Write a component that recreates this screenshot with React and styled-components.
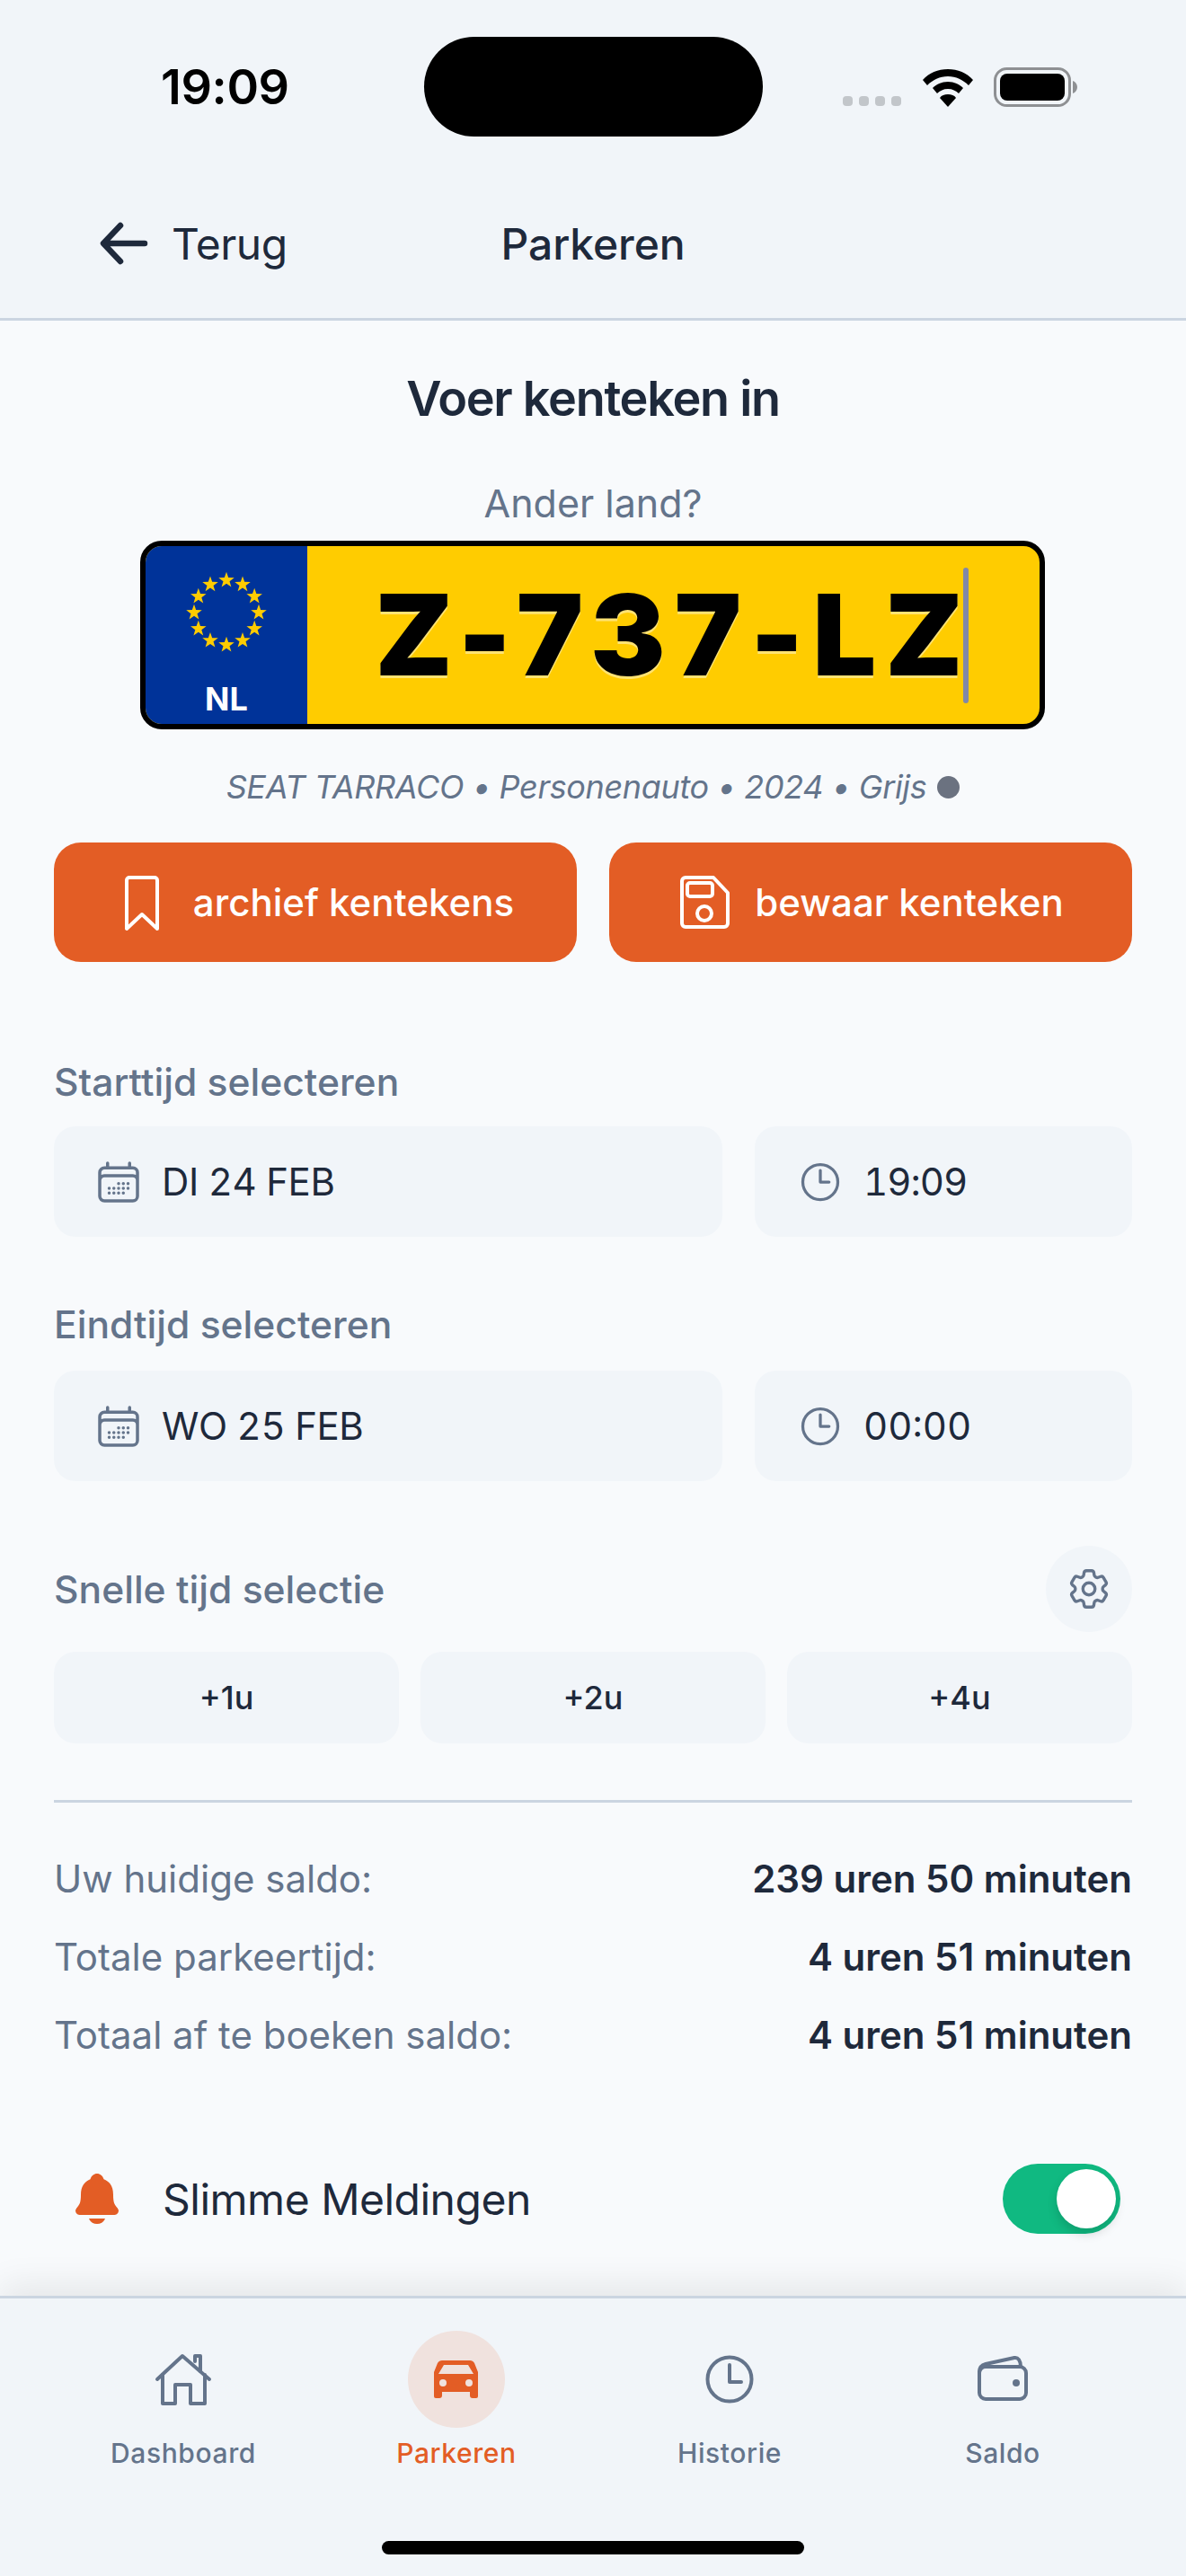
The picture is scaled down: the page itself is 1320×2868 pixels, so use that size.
import React from "react";
import styled, { createGlobalStyle } from "styled-components";
import {
  HiOutlineCalendarDays,
  HiOutlineClock,
  HiOutlineCog6Tooth,
} from "react-icons/hi2";
import { IoNotifications } from "react-icons/io5";

const GlobalStyle = createGlobalStyle`
  html, body { margin: 0; padding: 0; }
  body { font-family: Inter, "Liberation Sans", sans-serif; background: #f8fafc; }
`;

const Page = styled.div`
  width: 1320px;
  height: 2868px;
  display: flex;
  flex-direction: column;
  overflow: hidden;
`;

const Header = styled.header`
  height: 354px;
  background: #f1f5f9;
  border-bottom: 3px solid #cbd5e1;
  flex-shrink: 0;
`;

const StatusBar = styled.div`
  display: grid;
  grid-template-columns: 1fr 377px 1fr;
  align-items: center;
  padding-top: 41px;
`;

const Time = styled.div`
  font-size: 54px;
  font-weight: 600;
  color: #000;
  padding-left: 179px;
  letter-spacing: -0.4px;
`;

const Notch = styled.div`
  height: 111px;
  background: #000;
  border-radius: 56px;
`;

const StatusIcons = styled.div`
  display: flex;
  align-items: flex-end;
  height: 45px;
  padding-left: 89px;
`;

const SignalDots = styled.div`
  display: flex;
  gap: 7px;
  margin-right: 23px;
  margin-bottom: 1px;
`;

const SignalDot = styled.span`
  width: 11px;
  height: 11px;
  border-radius: 4px;
  background: #c2c6ca;
`;

const NavRow = styled.div`
  display: grid;
  grid-template-columns: 1fr auto 1fr;
  align-items: center;
  height: 120px;
  margin-top: 59px;
  padding: 0 108px;
  color: #1e293b;
`;

const BackLink = styled.div`
  display: flex;
  align-items: center;
  gap: 23px;
  font-size: 48px;
  font-weight: 400;
  letter-spacing: -0.5px;
`;

const PageTitle = styled.div`
  font-size: 48px;
  font-weight: 500;
  letter-spacing: -0.1px;
`;

const Main = styled.main`
  flex: 1;
  padding: 51px 60px 0;
  background: #f8fafc;
`;

const Heading = styled.h1`
  margin: 0;
  font-size: 54px;
  line-height: 72px;
  font-weight: 600;
  letter-spacing: -1.3px;
  text-align: center;
  color: #1e293b;
`;

const CountryLink = styled.div`
  margin-top: 50px;
  font-size: 43px;
  line-height: 60px;
  text-align: center;
  color: #64748b;
`;

const Plate = styled.div`
  display: flex;
  box-sizing: border-box;
  width: 1007px;
  height: 210px;
  margin: 12px 0 0 96px;
  border: 6px solid #000;
  border-radius: 24px;
  overflow: hidden;
  background: #ffcc00;
`;

const PlateBand = styled.div`
  width: 180px;
  flex-shrink: 0;
  background: #003399;
  display: flex;
  flex-direction: column;
  align-items: center;
  padding-top: 24px;
`;

const PlateCountry = styled.div`
  margin-top: 24px;
  font-size: 36px;
  line-height: 44px;
  font-weight: 700;
  color: #fff;
`;

const PlateField = styled.div`
  flex: 1;
  display: flex;
  align-items: center;
  justify-content: center;
  padding-right: 4px;
`;

const PlateText = styled.div`
  font-family: Inter, "Liberation Sans", sans-serif;
  font-size: 125px;
  line-height: 150px;
  font-weight: 900;
  letter-spacing: 10px;
  color: #000;
  text-shadow: 0 3px 0 rgba(255, 255, 255, 0.45);
`;

const Caret = styled.span`
  width: 6px;
  height: 151px;
  margin-left: -10px;
  border-radius: 3px;
  background: #8088a8;
`;

const VehicleLine = styled.div`
  display: flex;
  align-items: center;
  justify-content: center;
  gap: 12px;
  margin-top: 40px;
  font-size: 36px;
  line-height: 48px;
  font-style: italic;
  letter-spacing: -0.35px;
  color: #64748b;
`;

const ColourDot = styled.span`
  width: 25px;
  height: 25px;
  border-radius: 50%;
  background: #6b7280;
`;

const ActionRow = styled.div`
  display: grid;
  grid-template-columns: 1fr 1fr;
  gap: 36px;
  margin-top: 38px;
`;

const ActionButton = styled.div`
  height: 133px;
  box-sizing: border-box;
  padding-left: ${(p) => p.$inset}px;
  display: flex;
  align-items: center;
  justify-content: center;
  gap: ${(p) => p.$gap}px;
  background: #e35d25;
  border-radius: 30px;
  color: #fff;
  font-size: 42px;
  font-weight: 500;
`;

const FieldLabel = styled.div`
  margin-top: ${(p) => p.$top}px;
  font-size: 42.6px;
  line-height: 56px;
  font-weight: 500;
  color: #64748b;
`;

const FieldRow = styled.div`
  display: grid;
  grid-template-columns: 744px 1fr;
  gap: 36px;
  margin-top: ${(p) => p.$top}px;
`;

const Field = styled.div`
  height: 123px;
  display: flex;
  align-items: center;
  gap: ${(p) => p.$gap}px;
  padding-left: 44px;
  background: #f1f5f9;
  border-radius: 24px;
  font-size: 42px;
  font-variant-numeric: tabular-nums;
  letter-spacing: ${(p) => p.$spacing || 0}px;
  color: #1e293b;
  svg { color: #64748b; }
`;

const ClockIcon = styled(HiOutlineClock)`
  margin-left: 3px;
`;

const QuickHeader = styled.div`
  display: flex;
  align-items: center;
  justify-content: space-between;
  margin-top: 72px;
`;

const QuickLabel = styled.div`
  font-size: 42.6px;
  font-weight: 500;
  color: #64748b;
`;

const GearButton = styled.div`
  width: 96px;
  height: 96px;
  border-radius: 50%;
  background: #f1f5f9;
  color: #64748b;
  display: flex;
  align-items: center;
  justify-content: center;
`;

const QuickRow = styled.div`
  display: grid;
  grid-template-columns: repeat(3, 1fr);
  gap: 24px;
  margin-top: 22px;
`;

const QuickButton = styled.div`
  height: 102px;
  display: flex;
  align-items: center;
  justify-content: center;
  background: #f1f5f9;
  border-radius: 24px;
  font-size: 36px;
  font-weight: 500;
  color: #1e293b;
`;

const Divider = styled.div`
  height: 3px;
  margin-top: 63px;
  background: #cbd5e1;
`;

const Summary = styled.div`
  margin-top: 41px;
`;

const SummaryRow = styled.div`
  height: 87px;
  display: flex;
  align-items: center;
  justify-content: space-between;
  font-size: 42px;
`;

const SummaryLabel = styled.span`
  color: #64748b;
`;

const SummaryValue = styled.span`
  font-weight: 600;
  color: #1e293b;
`;

const NotifyRow = styled.div`
  display: flex;
  align-items: center;
  margin-top: 100px;
  padding: 0 13px 0 16px;
  color: #e35d25;
`;

const NotifyLabel = styled.div`
  flex: 1;
  margin-left: 41px;
  font-size: 48px;
  font-weight: 400;
  letter-spacing: -0.5px;
  color: #1e293b;
`;

const Toggle = styled.div`
  width: 131px;
  height: 78px;
  box-sizing: border-box;
  padding: 6px 5px;
  display: flex;
  justify-content: flex-end;
  border-radius: 39px;
  background: #10b981;
`;

const ToggleKnob = styled.div`
  width: 66px;
  height: 66px;
  border-radius: 50%;
  background: #fff;
  box-shadow: 0 6px 12px rgba(0, 0, 0, 0.15);
`;

const BottomNav = styled.nav`
  position: relative;
  height: 273px;
  flex-shrink: 0;
  border-top: 3px solid #cbd5e1;
  background: #f1f5f9;
  box-shadow: 0 -12px 36px rgba(0, 0, 0, 0.08);
  display: flex;
  flex-direction: column;
  align-items: center;
  padding-top: 36px;
`;

const NavItems = styled.div`
  display: grid;
  grid-template-columns: repeat(4, 304px);
`;

const NavItem = styled.div`
  display: flex;
  flex-direction: column;
  align-items: center;
  gap: 7px;
  font-size: 30px;
  line-height: 42px;
  font-weight: 500;
  letter-spacing: 0.6px;
  color: ${(p) => (p.$active ? "#e35d25" : "#64748b")};
`;

const NavIconWrap = styled.div`
  width: 108px;
  height: 108px;
  border-radius: 50%;
  display: flex;
  align-items: center;
  justify-content: center;
  background: ${(p) => (p.$active ? "#f0e2de" : "transparent")};
`;

const HomeIndicator = styled.div`
  width: 470px;
  height: 15px;
  margin-top: 77px;
  border-radius: 8px;
  background: #000;
`;

const BatteryIcon = styled.svg`
  margin-left: 22px;
`;

const Wifi = () => (
  <svg width="58" height="42" viewBox="0 0 58 42" fill="#000">
    <path d="M29 0C18 0 8 4 1 12l5 6c6-6 14-10 23-10s17 4 23 10l5-6C50 4 40 0 29 0z" />
    <path d="M29 14c-7 0-13 3-17 7l5 6c3-3 7-5 12-5s9 2 12 5l5-6c-4-4-10-7-17-7z" />
    <path d="M29 28c-4 0-7 1-9 4l9 10 9-10c-2-3-5-4-9-4z" />
  </svg>
);

const Battery = () => (
  <BatteryIcon width="94" height="44" viewBox="0 0 94 44">
    <rect x="1.5" y="1.5" width="83" height="41" rx="13" fill="none" stroke="#8e9093" strokeWidth="3" />
    <rect x="7" y="7" width="72" height="30" rx="8" fill="#000" />
    <path d="M88 15c3 1 5 4 5 7s-2 6-5 7z" fill="#8e9093" />
  </BatteryIcon>
);

const BackArrow = () => (
  <svg width="60" height="52" viewBox="0 0 60 52" fill="none" stroke="#1e293b" strokeWidth="6.5" strokeLinecap="round" strokeLinejoin="round">
    <path d="M26 6L7 26l19 20M8 26h45" />
  </svg>
);

const PlateStars = () => {
  const stars = Array.from({ length: 12 }, (_, i) => {
    const a = (i * Math.PI) / 6;
    const cx = 50 + 36 * Math.sin(a);
    const cy = 50 - 36 * Math.cos(a);
    const pts = Array.from({ length: 10 }, (_, k) => {
      const r = k % 2 ? 3.7 : 9.2;
      const t = (k * Math.PI) / 5;
      return `${(cx + r * Math.sin(t)).toFixed(2)},${(cy - r * Math.cos(t)).toFixed(2)}`;
    }).join(" ");
    return <polygon key={i} points={pts} fill="#ffcc00" />;
  });
  return (
    <svg width="100" height="100" viewBox="0 0 100 100">
      {stars}
    </svg>
  );
};

const BookmarkIcon = () => (
  <svg width="40" height="64" viewBox="0 0 40 64" fill="none" stroke="#fff" strokeWidth="4" strokeLinejoin="round">
    <path d="M3 7a3 3 0 0 1 3-3h28a3 3 0 0 1 3 3v54L20 45 3 61z" />
  </svg>
);

const SaveIcon = () => (
  <svg width="60" height="64" viewBox="0 0 60 64" fill="none" stroke="#fff" strokeWidth="4" strokeLinejoin="round">
    <path d="M9 4h31l16 17v34a4 4 0 0 1-4 4H9a4 4 0 0 1-4-4V8a4 4 0 0 1 4-4z" />
    <rect x="11" y="10" width="28" height="15" rx="3" />
    <circle cx="30" cy="44" r="8" />
  </svg>
);

const HomeIcon = () => (
  <svg width="64" height="64" viewBox="0 0 64 64" fill="none" stroke="currentColor" strokeWidth="4" strokeLinecap="round" strokeLinejoin="round">
    <path d="M3 32L31 6l30 26" />
    <path d="M9 27v32h14V38h17v21h16V27" />
    <path d="M45 12V6h6v17" />
  </svg>
);

const CarIcon = () => (
  <svg width="64" height="64" viewBox="0 0 64 64" fill="currentColor" fillRule="evenodd">
    <path d="M16 11h31c2 0 4 1 5 3l4 10v27a2 2 0 0 1-2 2h-4a3 3 0 0 1-3-3v-4H16v4a3 3 0 0 1-3 3H9a2 2 0 0 1-2-2V24l4-10c1-2 3-3 5-3z M18 16h27l6 10H12z M21 36a4 4 0 1 1-8 0a4 4 0 1 1 8 0z M50 36a4 4 0 1 1-8 0a4 4 0 1 1 8 0z" />
  </svg>
);

const HistoryIcon = () => (
  <svg width="64" height="64" viewBox="0 0 64 64" fill="none" stroke="currentColor" strokeWidth="4" strokeLinecap="round" strokeLinejoin="round">
    <circle cx="32" cy="32" r="24.5" />
    <path d="M32 16v19h13" />
  </svg>
);

const WalletIcon = () => (
  <svg width="64" height="64" viewBox="0 0 64 64" fill="none" stroke="currentColor" strokeWidth="4" strokeLinecap="round" strokeLinejoin="round">
    <rect x="6" y="18" width="52" height="36" rx="7" />
    <path d="M6 24c0-5 3-8 7-9l32-7c4-.7 7 3 7 10" />
    <circle cx="47" cy="36" r="4" fill="currentColor" stroke="none" />
  </svg>
);

const navItems = [
  { label: "Dashboard", icon: <HomeIcon /> },
  { label: "Parkeren", icon: <CarIcon />, active: true },
  { label: "Historie", icon: <HistoryIcon /> },
  { label: "Saldo", icon: <WalletIcon /> },
];

const summary = [
  ["Uw huidige saldo:", "239 uren 50 minuten"],
  ["Totale parkeertijd:", "4 uren 51 minuten"],
  ["Totaal af te boeken saldo:", "4 uren 51 minuten"],
];

const App = () => {
  return (
    <Page>
      <GlobalStyle />
      <Header>
        <StatusBar>
          <Time>19:09</Time>
          <Notch />
          <StatusIcons>
            <SignalDots>
              <SignalDot />
              <SignalDot />
              <SignalDot />
              <SignalDot />
            </SignalDots>
            <Wifi />
            <Battery />
          </StatusIcons>
        </StatusBar>
        <NavRow>
          <BackLink>
            <BackArrow />
            Terug
          </BackLink>
          <PageTitle>Parkeren</PageTitle>
        </NavRow>
      </Header>

      <Main>
        <Heading>Voer kenteken in</Heading>
        <CountryLink>Ander land?</CountryLink>
        <Plate>
          <PlateBand>
            <PlateStars />
            <PlateCountry>NL</PlateCountry>
          </PlateBand>
          <PlateField>
            <PlateText>Z-737-LZ</PlateText>
            <Caret />
          </PlateField>
        </Plate>
        <VehicleLine>
          SEAT TARRACO • Personenauto • 2024 • Grijs
          <ColourDot />
        </VehicleLine>
        <ActionRow>
          <ActionButton $gap={37} $inset={8}>
            <BookmarkIcon />
            archief kentekens
          </ActionButton>
          <ActionButton $gap={26} $inset={0}>
            <SaveIcon />
            bewaar kenteken
          </ActionButton>
        </ActionRow>

        <FieldLabel $top={106}>Starttijd selecteren</FieldLabel>
        <FieldRow $top={21}>
          <Field $gap={20} $spacing={-0.4}>
            <HiOutlineCalendarDays size={56} />
            DI 24 FEB
          </Field>
          <Field $gap={22} $spacing={-1}>
            <ClockIcon size={52} />
            19:09
          </Field>
        </FieldRow>

        <FieldLabel $top={70}>Eindtijd selecteren</FieldLabel>
        <FieldRow $top={23}>
          <Field $gap={20} $spacing={-0.4}>
            <HiOutlineCalendarDays size={56} />
            WO 25 FEB
          </Field>
          <Field $gap={22}>
            <ClockIcon size={52} />
            00:00
          </Field>
        </FieldRow>

        <QuickHeader>
          <QuickLabel>Snelle tijd selectie</QuickLabel>
          <GearButton>
            <HiOutlineCog6Tooth size={54} />
          </GearButton>
        </QuickHeader>
        <QuickRow>
          <QuickButton>+1u</QuickButton>
          <QuickButton>+2u</QuickButton>
          <QuickButton>+4u</QuickButton>
        </QuickRow>

        <Divider />
        <Summary>
          {summary.map(([label, value]) => (
            <SummaryRow key={label}>
              <SummaryLabel>{label}</SummaryLabel>
              <SummaryValue>{value}</SummaryValue>
            </SummaryRow>
          ))}
        </Summary>

        <NotifyRow>
          <IoNotifications size={64} />
          <NotifyLabel>Slimme Meldingen</NotifyLabel>
          <Toggle>
            <ToggleKnob />
          </Toggle>
        </NotifyRow>
      </Main>

      <BottomNav>
        <NavItems>
          {navItems.map((item) => (
            <NavItem key={item.label} $active={item.active}>
              <NavIconWrap $active={item.active}>{item.icon}</NavIconWrap>
              {item.label}
            </NavItem>
          ))}
        </NavItems>
        <HomeIndicator />
      </BottomNav>
    </Page>
  );
};

export default App;
